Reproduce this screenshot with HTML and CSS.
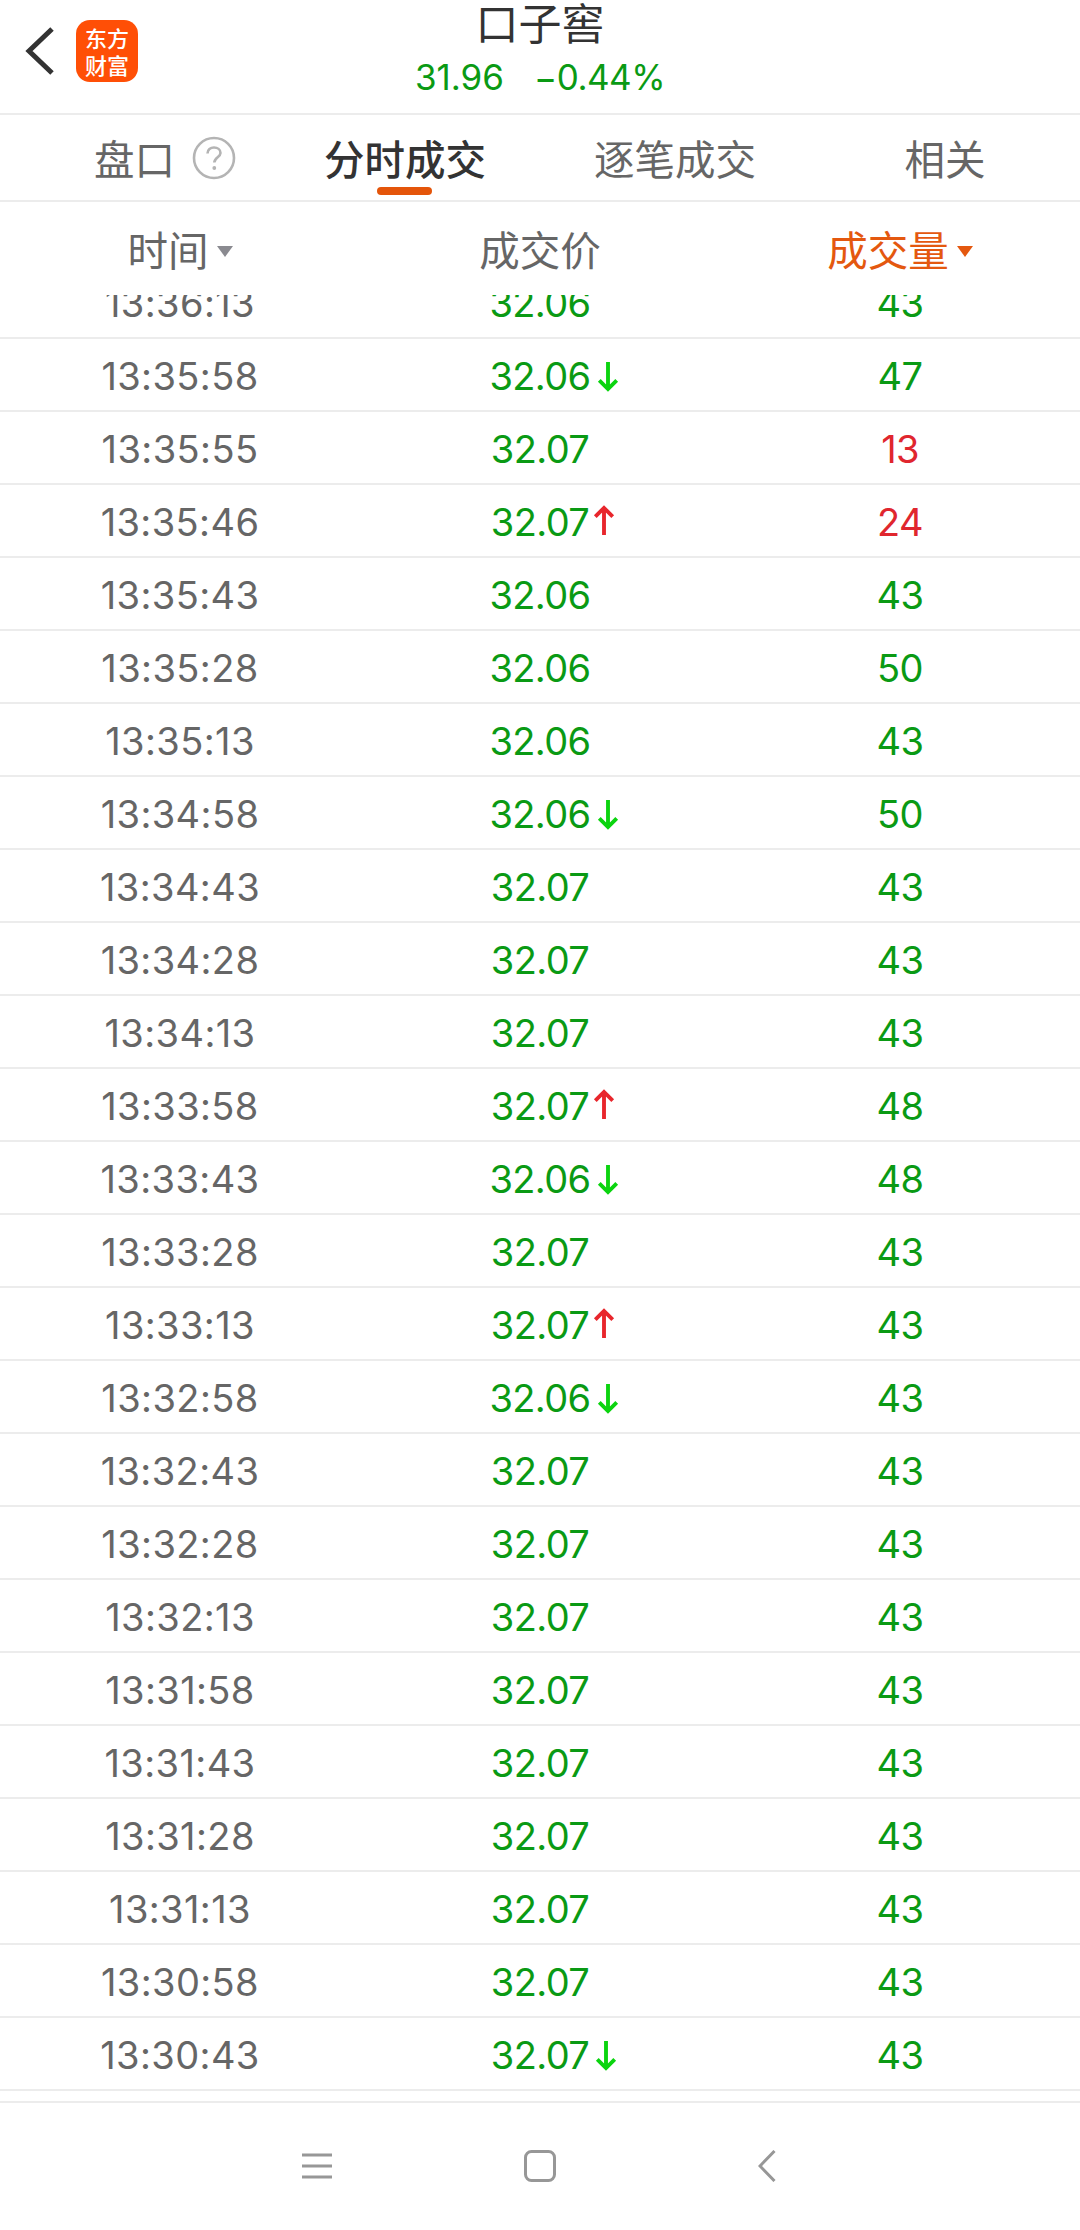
FILE: index.html
```html
<!DOCTYPE html>
<html lang="zh">
<head>
<meta charset="utf-8">
<title>口子窖</title>
<link rel="stylesheet" href="styles.css">
</head>
<body>
<svg class="defs" width="0" height="0" aria-hidden="true">
  <symbol id="down" viewBox="0 0 24 32"><path d="M12 1V29M3 20L12 29L21 20" fill="none" stroke="currentColor" stroke-width="4"/></symbol>
  <symbol id="up" viewBox="0 0 24 32"><path d="M12 31V3M3 12L12 3L21 12" fill="none" stroke="currentColor" stroke-width="4"/></symbol>
</svg>
<div class="app">
  <header class="topbar">
    <div class="top-left">
      <svg class="back" viewBox="0 0 30 50"><path d="M27 3L4 25L27 47" fill="none" stroke="#333" stroke-width="5"/></svg>
      <div class="logo"><span>东方</span><span>财富</span></div>
    </div>
    <div class="top-title">
      <div class="name">口子窖</div>
      <div class="quote"><span>31.96</span><span class="chg">−0.44%</span></div>
    </div>
  </header>
  <nav class="tabs">
    <div class="tab tab-pankou">盘口<svg class="help" viewBox="0 0 44 44"><circle cx="22" cy="22" r="20" fill="none" stroke="#b4b4b4" stroke-width="2.6"/><path d="M15.5 17.5C15.5 13.5 18.5 11.5 22 11.5C25.5 11.5 28.5 13.7 28.5 17C28.5 21 22.3 21.5 22.3 26.5" fill="none" stroke="#b4b4b4" stroke-width="2.6"/><circle cx="22.3" cy="32" r="1.9" fill="#b4b4b4"/></svg></div>
    <div class="tab tab-active">分时成交</div>
    <div class="tab">逐笔成交</div>
    <div class="tab">相关</div>
  </nav>
  <div class="cols">
    <div class="col">时间<i class="caret"></i></div>
    <div class="col">成交价</div>
    <div class="col col-sort">成交量<i class="caret"></i></div>
  </div>
  <main class="list">
    <div class="row row-first"><div class="t">13:36:13</div><div class="p"><b>32.06</b></div><div class="v">43</div></div>
    <div class="row"><div class="t">13:35:58</div><div class="p"><b>32.06<svg class="arr dn"><use href="#down"/></svg></b></div><div class="v">47</div></div>
    <div class="row"><div class="t">13:35:55</div><div class="p"><b>32.07</b></div><div class="v red">13</div></div>
    <div class="row"><div class="t">13:35:46</div><div class="p"><b>32.07<svg class="arr upw"><use href="#up"/></svg></b></div><div class="v red">24</div></div>
    <div class="row"><div class="t">13:35:43</div><div class="p"><b>32.06</b></div><div class="v">43</div></div>
    <div class="row"><div class="t">13:35:28</div><div class="p"><b>32.06</b></div><div class="v">50</div></div>
    <div class="row"><div class="t">13:35:13</div><div class="p"><b>32.06</b></div><div class="v">43</div></div>
    <div class="row"><div class="t">13:34:58</div><div class="p"><b>32.06<svg class="arr dn"><use href="#down"/></svg></b></div><div class="v">50</div></div>
    <div class="row"><div class="t">13:34:43</div><div class="p"><b>32.07</b></div><div class="v">43</div></div>
    <div class="row"><div class="t">13:34:28</div><div class="p"><b>32.07</b></div><div class="v">43</div></div>
    <div class="row"><div class="t">13:34:13</div><div class="p"><b>32.07</b></div><div class="v">43</div></div>
    <div class="row"><div class="t">13:33:58</div><div class="p"><b>32.07<svg class="arr upw"><use href="#up"/></svg></b></div><div class="v">48</div></div>
    <div class="row"><div class="t">13:33:43</div><div class="p"><b>32.06<svg class="arr dn"><use href="#down"/></svg></b></div><div class="v">48</div></div>
    <div class="row"><div class="t">13:33:28</div><div class="p"><b>32.07</b></div><div class="v">43</div></div>
    <div class="row"><div class="t">13:33:13</div><div class="p"><b>32.07<svg class="arr upw"><use href="#up"/></svg></b></div><div class="v">43</div></div>
    <div class="row"><div class="t">13:32:58</div><div class="p"><b>32.06<svg class="arr dn"><use href="#down"/></svg></b></div><div class="v">43</div></div>
    <div class="row"><div class="t">13:32:43</div><div class="p"><b>32.07</b></div><div class="v">43</div></div>
    <div class="row"><div class="t">13:32:28</div><div class="p"><b>32.07</b></div><div class="v">43</div></div>
    <div class="row"><div class="t">13:32:13</div><div class="p"><b>32.07</b></div><div class="v">43</div></div>
    <div class="row"><div class="t">13:31:58</div><div class="p"><b>32.07</b></div><div class="v">43</div></div>
    <div class="row"><div class="t">13:31:43</div><div class="p"><b>32.07</b></div><div class="v">43</div></div>
    <div class="row"><div class="t">13:31:28</div><div class="p"><b>32.07</b></div><div class="v">43</div></div>
    <div class="row"><div class="t">13:31:13</div><div class="p"><b>32.07</b></div><div class="v">43</div></div>
    <div class="row"><div class="t">13:30:58</div><div class="p"><b>32.07</b></div><div class="v">43</div></div>
    <div class="row"><div class="t">13:30:43</div><div class="p"><b>32.07<svg class="arr dn"><use href="#down"/></svg></b></div><div class="v">43</div></div>
  </main>
  <footer class="navbar">
    <svg class="nav-menu" viewBox="0 0 30 26"><path d="M0 2H30M0 13H30M0 24H30" stroke="#979797" stroke-width="3"/></svg>
    <svg class="nav-home" viewBox="0 0 32 32"><rect x="1.5" y="1.5" width="29" height="29" rx="6" fill="none" stroke="#979797" stroke-width="3"/></svg>
    <svg class="nav-back" viewBox="0 0 18 32"><path d="M16.5 1L2 16L16.5 31" fill="none" stroke="#979797" stroke-width="3"/></svg>
  </footer>
</div>
</body>
</html>
```

FILE: styles.css
```css
* { box-sizing: border-box; }
html, body { margin: 0; padding: 0; background: #fff; }
body { font-family: Inter, "Noto Sans CJK SC", sans-serif; }
.defs { position: absolute; }
.app { width: 1080px; height: 2230px; display: flex; flex-direction: column; overflow: hidden; }

.topbar { height: 115px; flex: none; position: relative; border-bottom: 2px solid #ececec; }
.top-left { display: flex; align-items: center; height: 101px; padding-left: 25px; gap: 21px; }
.back { width: 30px; height: 50px; display: block; }
.logo { width: 62px; height: 62px; border-radius: 14px; background: #ff4f06; color: #fff; display: flex; flex-direction: column; align-items: center; justify-content: center; font: 500 22px/27px "Noto Sans CJK SC", sans-serif; }
.top-title { position: absolute; left: 0; right: 0; top: -1px; text-align: center; }
.name { font: 400 43px/44px "Noto Sans CJK SC", sans-serif; color: #333; }
.quote { margin-top: 11px; display: flex; justify-content: center; gap: 30px; font-size: 35px; line-height: 46px; color: #0a9a14; }
.chg { letter-spacing: -0.5px; }

.tabs { height: 87px; flex: none; display: flex; border-bottom: 2px solid #ececec; font: 400 40.5px/85px "Noto Sans CJK SC", sans-serif; color: #666; }
.tab { position: relative; width: 270px; text-align: center; }
.tab-pankou { display: flex; align-items: center; justify-content: center; gap: 17px; padding-left: 60px; }
.help { width: 44px; height: 44px; }
.tab-active { color: #333; font-weight: 500; }
.tab-active::after { content: ""; position: absolute; left: 107px; top: 72px; width: 55px; height: 8px; border-radius: 4px; background: #e4550a; }

.cols { height: 93px; flex: none; display: grid; grid-template-columns: repeat(3, 360px); font: 400 40.5px/94px "Noto Sans CJK SC", sans-serif; color: #666; text-align: center; }
.col-sort { color: #e4580f; }
.caret { display: inline-block; width: 0; height: 0; margin-left: 8px; vertical-align: 9px; border-left: 8.5px solid transparent; border-right: 8.5px solid transparent; border-top: 11px solid #8a8a90; }
.col-sort .caret { border-top-color: #e4580f; }

.list { height: 1796px; flex: none; overflow: hidden; }
.row { height: 73px; display: grid; grid-template-columns: repeat(3, 360px); align-items: center; text-align: center; border-bottom: 2px solid #ececec; padding-top: 3px; font-size: 38px; line-height: 68px; letter-spacing: -0.6px; }
.row-first { margin-top: -29px; }
.t { color: #666; letter-spacing: 0.4px; }
.p { color: #0a9a14; }
.p b { position: relative; display: inline-block; font-weight: 400; }
.v { color: #0a9a14; }
.red { color: #e0262e; }
.arr { position: absolute; left: 100%; top: 19px; width: 24px; height: 31px; margin-left: 5px; }
.dn { color: #0bd40f; }
.upw { color: #e8262c; top: 17px; margin-left: 3px; }

.navbar { flex: 1; border-top: 2px solid #ececec; margin-top: 10px; padding-bottom: 2px; position: relative; display: flex; align-items: center; }
.nav-menu { width: 30px; height: 26px; margin-left: 302px; }
.nav-home { width: 32px; height: 32px; margin-left: 192px; }
.nav-back { width: 18px; height: 32px; margin-left: 202px; }
```
